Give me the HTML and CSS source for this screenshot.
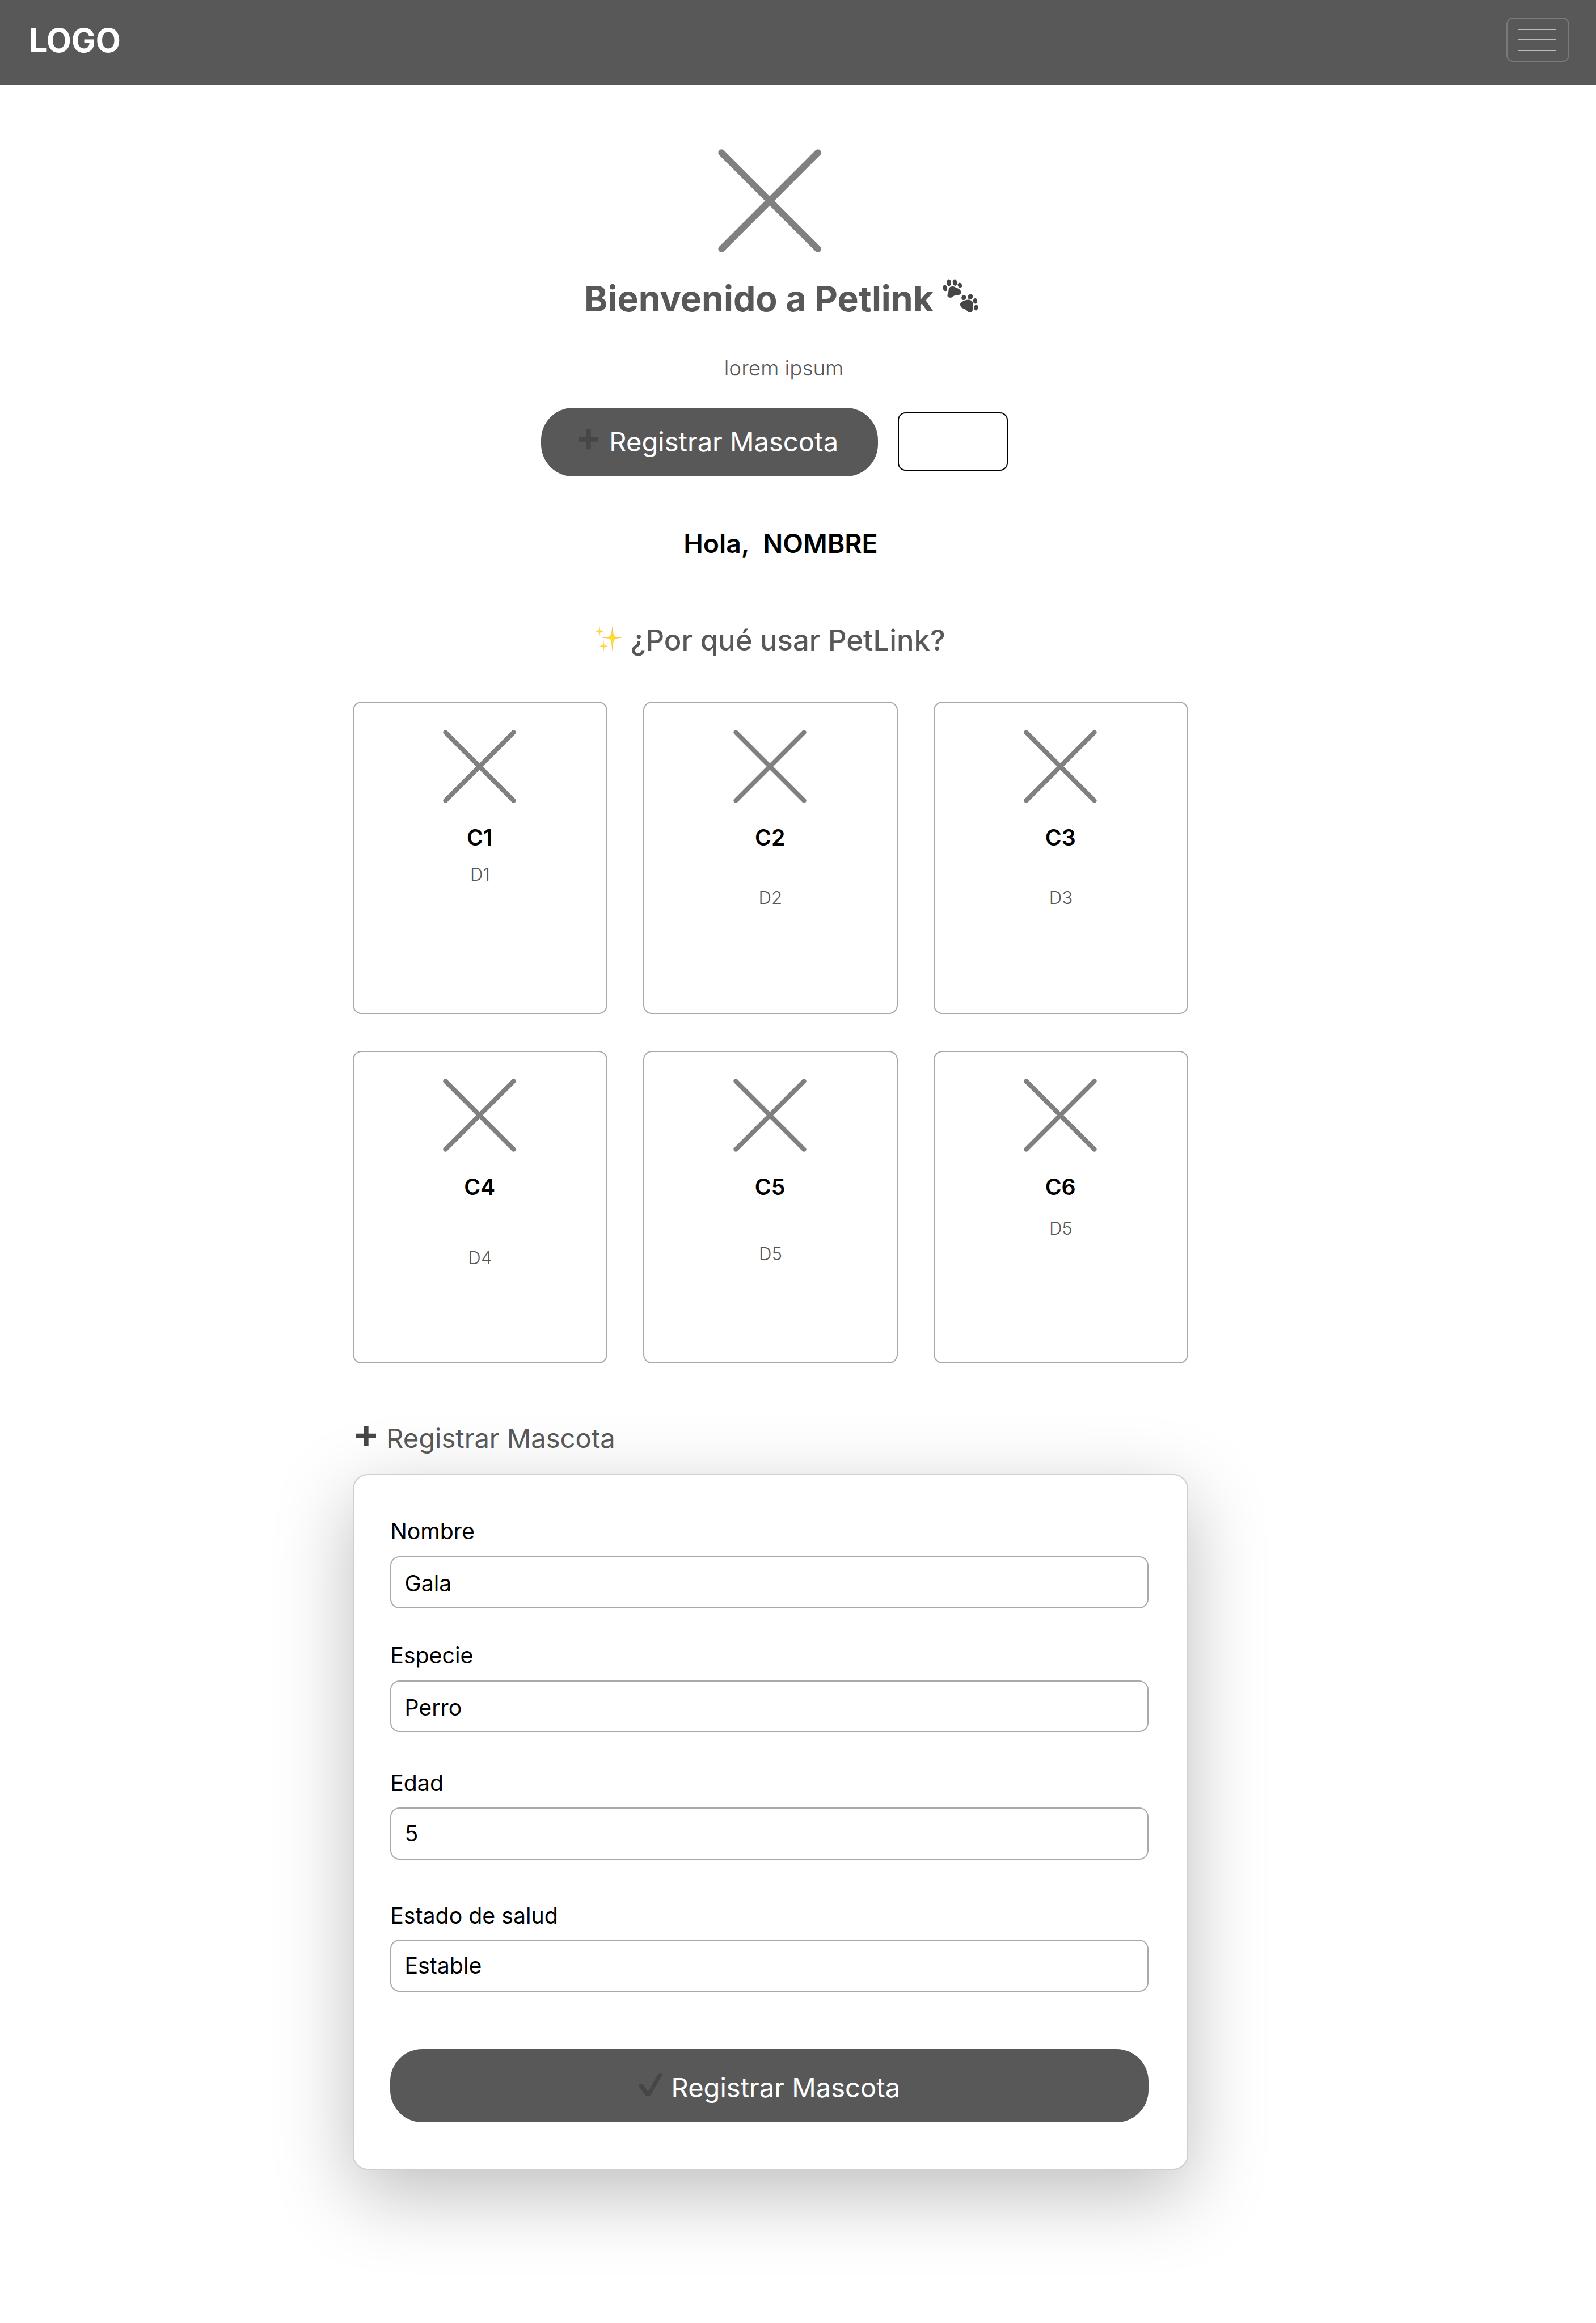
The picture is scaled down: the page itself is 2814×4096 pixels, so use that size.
FILE: index.html
```html
<!DOCTYPE html>
<html lang="es">
<head>
<meta charset="utf-8">
<title>Petlink</title>
<link rel="stylesheet" href="styles.css">
</head>
<body>
<svg class="defs" aria-hidden="true">
  <defs>
    <radialGradient id="gold"><stop offset="0" stop-color="#ffe033"/><stop offset=".5" stop-color="#fdcf3a"/><stop offset="1" stop-color="#f39a3e"/></radialGradient>
    <symbol id="cross" viewBox="0 0 132 132"><path d="M4.5 4.5 127.500 127.500M127.500 4.500 4.500 127.500" fill="none" stroke="#808080" stroke-width="8.500" stroke-linecap="round"/></symbol>
    <symbol id="plus" viewBox="0 0 36 36"><path d="M14 0h8v14h14v8H22v14h-8V22H0v-8h14z" fill="#464646"/></symbol>
  </defs>
</svg>

<header class="navbar">
  <span class="brand">LOGO</span>
  <button class="toggler" aria-label="Menú"><i></i><i></i><i></i></button>
</header>

<main class="page">
  <section class="hero">
    <svg class="hero-cross"><use href="#cross"/></svg>
    <h1 class="hero-title">Bienvenido a Petlink
      <svg class="paws" viewBox="32 41 194 184" fill="#464646">
        <ellipse cx="45" cy="90" rx="11.500" ry="17" transform="rotate(-12 45 90)"/>
        <ellipse cx="66" cy="61" rx="12" ry="18.500" transform="rotate(-3 66 61)"/>
        <ellipse cx="98.500" cy="60" rx="12" ry="17.500" transform="rotate(-8 98 60)"/>
        <ellipse cx="125.500" cy="75" rx="11" ry="13.500" transform="rotate(-30 125 75)"/>
        <path d="M66 93C69 80 90 77 102 86C112 90 120 92 128 102C134 111 133 122 122 126C110 129 99 127 91 133C85 141 75 143 66 141C55 136 57 126 61 117C65 108 63 101 66 93Z"/>
        <ellipse cx="146.500" cy="141" rx="12.500" ry="14" transform="rotate(25 146 141)"/>
        <ellipse cx="182" cy="137" rx="13" ry="15" transform="rotate(35 182 137)"/>
        <ellipse cx="208.500" cy="160" rx="11.500" ry="14.500"/>
        <ellipse cx="213" cy="195.500" rx="10.500" ry="16" transform="rotate(5 213 195)"/>
        <path d="M127 178C127 169 136 164 145 160C155 154 168 151 180 154C190 158 197 165 197 175C196 183 193 189 195 198C197 208 193 219 184 222C174 223 167 218 161 210C154 203 143 202 136 197C129 192 127 185 127 178Z"/>
      </svg>
    </h1>
    <p class="lead">lorem ipsum</p>
    <div class="actions">
      <button class="btn btn-hero"><svg class="plus"><use href="#plus"/></svg>Registrar Mascota</button>
      <span class="blank"></span>
    </div>
    <p class="greeting">Hola,&nbsp; NOMBRE</p>
    <h2 class="why">
      <svg class="sparkles" viewBox="40 38 150 146" fill="url(#gold)">
        <path d="M134 43C137 84 143 98 150 101C159 104 172 106 189 106.500C172 108 159 110 150 113C143 117 137 130 134 181C131 130 125 117 118 113C109 110 95 108 77 106.500C95 105 109 103 118 100C125 96 131 84 134 43Z"/>
        <path d="M64.500 39C66 58 68 66 71 68C75 70 80 71.500 85 72.500C80 74 75 75 71 77C68 80 66 88 64.500 107C63 88 61 80 58 77C54 75 48 74 42 72.500C48 71 54 70 58 68C61 66 63 58 64.500 39Z"/>
        <path d="M86.500 121C88 138 90 145 93 147.500C98 150 104 151.500 110 152C104 153 98 154 93 156.500C90 159 88 166 86.500 183C85 166 83 159 80 156.500C75 154 70 153 64 152C70 151.500 75 150 80 147.500C83 145 85 138 86.500 121Z"/>
      </svg>¿Por qué usar PetLink?
    </h2>
  </section>

  <section class="cards">
    <article class="card"><svg class="card-cross"><use href="#cross"/></svg><h3>C1</h3><p class="d1">D1</p></article>
    <article class="card"><svg class="card-cross"><use href="#cross"/></svg><h3>C2</h3><p class="d2">D2</p></article>
    <article class="card"><svg class="card-cross"><use href="#cross"/></svg><h3>C3</h3><p class="d2">D3</p></article>
    <article class="card"><svg class="card-cross"><use href="#cross"/></svg><h3>C4</h3><p class="d4">D4</p></article>
    <article class="card"><svg class="card-cross"><use href="#cross"/></svg><h3>C5</h3><p class="d5">D5</p></article>
    <article class="card"><svg class="card-cross"><use href="#cross"/></svg><h3>C6</h3><p class="d6">D5</p></article>
  </section>

  <h2 class="form-title"><svg class="plus"><use href="#plus"/></svg>Registrar Mascota</h2>
  <section class="form">
    <div class="field name"><span class="label">Nombre</span><div class="input low">Gala</div></div>
    <div class="field species"><span class="label">Especie</span><div class="input low">Perro</div></div>
    <div class="field age"><span class="label">Edad</span><div class="input">5</div></div>
    <div class="field health"><span class="label">Estado de salud</span><div class="input">Estable</div></div>
    <button class="btn btn-submit">
      <svg class="check" viewBox="0 0 44 42"><path d="M.5 23.500C-.5 19 6 16.500 9 20.500L16.800 33L33.500 4C35.500 .8 38.500 .2 42.500 0C43.400 .3 43.300 1.500 42.700 2.600L22.500 37.500C19.500 42.500 13.500 42.500 11 38Z" fill="#464646"/></svg>Registrar Mascota
    </button>
  </section>
</main>
</body>
</html>
```
FILE: styles.css
```css
/* 1rem = 100 design units */
html { font-size: 97.7083px; }

* { box-sizing: border-box; margin: 0; padding: 0; }

body {
  font: 400 .4rem/1 Inter, "Liberation Sans", sans-serif;
  color: #000;
  background: #fff;
  height: 41.92rem;
  overflow: hidden;
}

h1, h2, h3, p, .brand, .label { line-height: 1; white-space: nowrap; }
svg { display: block; flex: none; }
.defs { position: absolute; width: 0; height: 0; }

.navbar {
  height: 1.52rem;
  padding: .32rem .48rem 0 .522rem;
  display: flex;
  justify-content: space-between;
  align-items: flex-start;
  background: #585858;
}
.brand { margin-top: .122rem; font-size: .586rem; font-weight: 700; color: #fff; }
.toggler {
  width: 1.14rem;
  height: .8rem;
  padding: .18rem .22rem .18rem .2rem;
  display: flex;
  flex-direction: column;
  justify-content: space-between;
  background: none;
  border: 2px solid #7a7a7a;
  border-radius: .12rem;
}
.toggler i { display: block; width: .68rem; height: 2px; background: #bcbcbc; }

.page { width: 15.08rem; margin-left: 6.363rem; }

.hero { display: flex; flex-direction: column; align-items: flex-start; padding-top: 1.176rem; }
.hero-cross { width: 1.865rem; height: 1.865rem; margin-left: 6.595rem; }
.hero-title {
  display: flex;
  gap: .162rem;
  margin: .506rem 0 0 4.18rem;
  font-size: .64rem;
  font-weight: 700;
  color: #585858;
}
.paws { width: .647rem; height: .613rem; margin-top: -.034rem; }
.lead { margin: .747rem 0 0 6.704rem; font-size: .377rem; font-weight: 300; color: #585858; }

.actions { display: flex; align-items: flex-start; margin: .529rem 0 0 3.4rem; gap: .36rem; }
.btn {
  display: flex;
  align-items: center;
  font: 400 .482rem/1 Inter, "Liberation Sans", sans-serif;
  color: #fff;
  background: #585858;
  border: 0;
  white-space: nowrap;
}
.btn-hero { width: 6.08rem; height: 1.24rem; padding: 0 0 .02rem .68rem; gap: .19rem; border-radius: .58rem; }
.btn-hero .plus { margin-bottom: .08rem; }
.plus { width: .363rem; height: .363rem; }
.blank { width: 1.98rem; height: 1.06rem; margin-top: .08rem; border: 2px solid #000; border-radius: .14rem; }

.greeting { margin: .97rem 0 0 5.972rem; font-size: .475rem; font-weight: 600; }
.why {
  display: flex;
  gap: .143rem;
  margin: 1.25rem 0 0 4.373rem;
  font-size: .52rem;
  font-weight: 500;
  color: #585858;
}
.sparkles { width: .5rem; height: .487rem; margin-top: -.016rem; }

.cards {
  display: grid;
  grid-template-columns: repeat(3, 4.6rem);
  grid-auto-rows: 5.64rem;
  gap: .66rem .64rem;
  margin-top: .847rem;
}
.card {
  display: flex;
  flex-direction: column;
  align-items: center;
  padding-top: .487rem;
  border: 2px solid #a9a9a9;
  border-radius: .16rem;
}
.card-cross { width: 1.32rem; height: 1.32rem; margin-right: .02rem; }
.card h3 { margin: .426rem .015rem 0 0; font-size: .402rem; font-weight: 600; }
.card p { font-size: .32rem; font-weight: 300; color: #585858; }
.card .d1 { margin-top: .315rem; }
.card .d2 { margin-top: .733rem; }
.card .d4 { margin-top: .934rem; }
.card .d5 { margin-top: .855rem; }
.card .d6 { margin-top: .395rem; }

.form-title {
  display: flex;
  gap: .185rem;
  margin: 1.105rem 0 0 .06rem;
  font-size: .482rem;
  font-weight: 400;
  color: #585858;
}
.form-title .plus { margin-top: .027rem; }

.form {
  height: 12.555rem;
  margin-top: .413rem;
  padding: .809rem .7rem 0 .66rem;
  background: #fff;
  border: 2px solid #cfcfcf;
  border-radius: .27rem;
  box-shadow: 0 .42rem 1.4rem rgba(0, 0, 0, .26);
}
.field { display: flex; flex-direction: column; }
.label { font-size: .402rem; }
.input {
  height: .94rem;
  display: flex;
  align-items: center;
  padding-left: .238rem;
  font-size: .402rem;
  border: 2px solid #a9a9a9;
  border-radius: .17rem;
}
.low { padding-top: .05rem; }
.name, .species, .age { gap: .248rem; }
.species { margin-top: .651rem; }
.age { margin-top: .709rem; }
.health { margin-top: .813rem; gap: .225rem; }

.btn-submit { width: 100%; height: 1.32rem; margin-top: 1.04rem; padding: .05rem 0 0 4.48rem; gap: .15rem; border-radius: .58rem; }
.check { width: .44rem; height: .42rem; margin-bottom: .074rem; }
```
